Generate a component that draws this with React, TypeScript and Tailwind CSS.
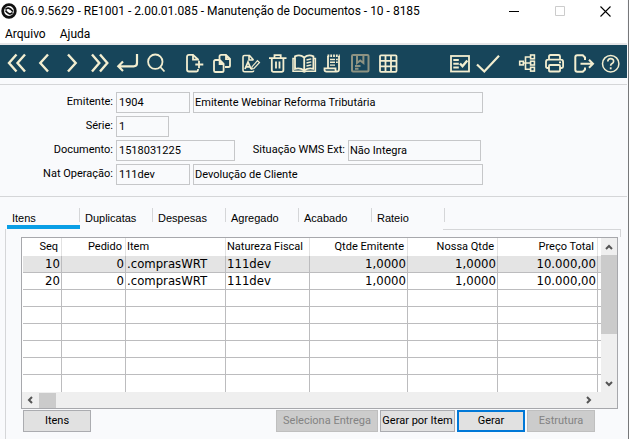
import type { ReactNode } from "react"

const Icon = ({ children }: { children: ReactNode }) => (
    <svg width="28" height="24" viewBox="0 0 28 24" fill="none" stroke="currentColor" strokeWidth="1.8" aria-hidden="true">
        {children}
    </svg>
)

type Tool = { label: string; icon: ReactNode; disabled?: boolean }

const navTools: Tool[] = [
    { label: "Primeiro", icon: <path strokeWidth="2.4" d="M14.500 2.500 7 11l7.500 8.500M23 2.500 15.500 11l7.500 8.500" /> },
    { label: "Anterior", icon: <path strokeWidth="2.4" d="M18 2.500 10.300 11l7.700 8.500" /> },
    { label: "Próximo", icon: <path strokeWidth="2.4" d="M10 2.500 17.700 11 10 19.500" /> },
    { label: "Último", icon: <path strokeWidth="2.4" d="M6 2.500 13.300 11 6 19.500M14 2.500 21.300 11l-7.300 8.500" /> },
    { label: "Vai para", icon: <path strokeWidth="2.2" d="M23 2v9q0 3.300-3.300 3.300H4.500M9 9.500l-4.700 4.800L9 19" /> },
    {
        label: "Pesquisa",
        icon: (
            <>
                <circle cx="13.3" cy="9.7" r="7.2" />
                <path d="m18.300 15 4.200 4.500" />
            </>
        ),
    },
]

const editTools: Tool[] = [
    { label: "Incluir", icon: <path d="M18 8.500V7.500L13 2.900H9q-2 0-2 2v12.600q0 2 2 2h7.500q1.500 0 1.500-1.500v-1M13 3v4.700h5M19 8.800v7.400M15.300 12.500h8" /> },
    {
        label: "Copiar",
        icon: (
            <path d="M11.500 8V4.500q0-1.600 1.600-1.600H18l4 4v6.500q0 1.600-1.600 1.600H17M18 3v4.200h4M11.800 8H7.500Q6 8 6 9.500v8.900Q6 20 7.500 20H14q1.600 0 1.600-1.600v-6.600zM11.600 8.200V12h4" />
        ),
    },
    {
        label: "Modificar",
        icon: (
            <>
                <path d="M17.500 8 13.500 3.500H8.500q-1.500 0-1.500 1.500v13.200q0 1.500 1.500 1.500h7.700q1.500 0 1.500-1.300M13 3.500V8h4.500" strokeWidth="1.600" />
                <path d="m9 17 3-7 3 7M10 14.800h4" />
                <path d="m21.500 8.700 2 1.800-5.600 6-2.400.7.600-2.500z" strokeWidth="1.200" />
            </>
        ),
    },
    { label: "Eliminar", icon: <path d="M5 6.200h17.500M10.500 6V3.200h6.200V6M7.800 6.500v11.500q0 1.800 1.800 1.800h8q1.800 0 1.800-1.800V6.500M12 9.500v7M15.500 9.500v7" /> },
    {
        label: "Consulta",
        icon: (
            <>
                <path d="M12.200 5.500Q8 2 3 4.400v12.400q5-1.500 9.200 1.700 4.200-3.200 9.200-1.700V4.400q-5-2.400-9.200 1.100v13" />
                <path d="M3 6.500H1v12.700h9.500l1.700.8 1.700-.8h9.500V6.500h-2" strokeWidth="1.500" />
                <path d="m14.500 8 4.800-1.200M14.500 11l4.800-1.200M14.500 14l4.800-1.200" strokeWidth="1.300" />
            </>
        ),
    },
    {
        label: "Relatório",
        icon: (
            <>
                <path d="M8 4v11.800M19 4v13.300q0 2.400-2.400 2.400H6.500q-2 0-2-2v-1.400h11v1.400q0 2 1.700 2" />
                <path d="M7.500 3.800h12.300" strokeWidth="2.600" strokeDasharray="1.800 1" />
                <path d="M10 7.500h5M16 7.500h1.800M10 10.300h5M16 10.300h1.800M10 13.100h5" strokeWidth="1.400" />
            </>
        ),
    },
    {
        label: "Salvar",
        disabled: true,
        icon: (
            <>
                <rect x="4" y="3" width="16.500" height="16.500" rx="1" strokeWidth="2" />
                <path d="M9 3.500V11l3.200-2.500 3.200 2.500V3.500M7 14h5.500M7 16.800h3.500" strokeWidth="2" />
            </>
        ),
    },
    {
        label: "Planilha",
        icon: (
            <>
                <rect x="4" y="3.300" width="16.500" height="16.500" rx="1" />
                <path d="M9.500 3.500v16M15 3.500v16M4 8.800h16.500M4 14.300h16.500" />
            </>
        ),
    },
]

const confirmTools: Tool[] = [
    {
        label: "Conferência",
        icon: (
            <>
                <rect x="5" y="4" width="18" height="15.500" />
                <path d="M7.300 8h5.500M7.300 11.700h5.500M7.300 15.400h5.500" strokeWidth="2" />
                <path d="m14 11.500 2.500 2.700L21.300 8.500" strokeWidth="2.400" />
            </>
        ),
    },
    { label: "Confirma", icon: <path strokeWidth="2.200" d="m3 12.500 7.300 7L25 3.700" /> },
]

const exitTools: Tool[] = [
    {
        label: "Consultas relacionadas",
        icon: (
            <g strokeWidth="1.600">
                <rect x="6.700" y="9.300" width="3.600" height="3.600" />
                <rect x="17.600" y="3" width="3.800" height="3.800" />
                <rect x="17.600" y="9.200" width="3.800" height="3.800" />
                <rect x="17.600" y="15.300" width="3.800" height="3.800" />
                <path d="M10.500 11h7M17.500 5h-5v12.300h5" />
            </g>
        ),
    },
    {
        label: "Imprimir",
        icon: (
            <>
                <path d="M8 7.500V4.500q0-1.500 1.500-1.500h8Q19 3 19 4.500v3M8 16H6.500Q5 16 5 14.500V10q0-2.300 2.300-2.300h12.500q2.300 0 2.300 2.300v4.500q0 1.500-1.500 1.500H19" />
                <rect x="8" y="13" width="11" height="6.500" rx="1" />
                <path d="M18 10.300h2" />
            </>
        ),
    },
    { label: "Sair", icon: <path strokeWidth="2" d="M16 8V5.500L13.800 3.300H8.300q-2 0-2 2v12.400q0 2 2 2h5.500l2.200-2.200V15.500M11.500 11.700H24M20 7.700l4 4-4 4" /> },
    {
        label: "Ajuda",
        icon: (
            <>
                <circle cx="13.700" cy="11.700" r="8.200" strokeWidth="1.500" />
                <path d="M10.800 9.500q0-2.800 2.900-2.800t2.900 2.600q0 1.500-1.500 2.300t-1.400 2.200" strokeWidth="1.700" />
                <path d="M13.700 15.300v2" />
            </>
        ),
    },
]

const ToolGroup = ({ tools, className = "" }: { tools: Tool[]; className?: string }) => (
    <div className={`flex ${className}`}>
        {tools.map((tool) => (
            <button key={tool.label} type="button" aria-label={tool.label} disabled={tool.disabled} className="w-7 text-[#f3eed0] disabled:text-[#8e9382]">
                <Icon>{tool.icon}</Icon>
            </button>
        ))}
    </div>
)

const TitleBar = () => (
    <header className="flex h-[22px] items-center pl-px">
        <svg width="16" height="16" viewBox="0 0 16 16" aria-hidden="true">
            <circle cx="8" cy="8" r="6.300" fill="#fff" stroke="#111" strokeWidth="2.800" />
            <path d="M4.500 6.500C6 4.200 9 4.600 12 8.500M11.500 9.500C10 11.800 7 11.400 4.500 7.500" fill="none" stroke="#111" strokeWidth="1.700" />
        </svg>
        <h1 className="ml-1 text-[12px]">06.9.5629 - RE1001 - 2.00.01.085 - Manutenção de Documentos - 10 - 8185</h1>
        <div className="ml-auto flex">
            <button type="button" aria-label="Minimizar" className="flex w-[46px] justify-center">
                <svg width="11" height="11" viewBox="0 0 11 11"><path d="M0 5.500h10" stroke="#000" /></svg>
            </button>
            <button type="button" aria-label="Maximizar" disabled className="flex w-[46px] justify-center">
                <svg width="11" height="11" viewBox="0 0 11 11"><path d="M.5.500h9v9h-9z" fill="none" stroke="#ccc" /></svg>
            </button>
            <button type="button" aria-label="Fechar" className="flex w-11 justify-center">
                <svg width="11" height="11" viewBox="0 0 11 11"><path d="m.5.500 10 10m0-10-10 10" stroke="#000" strokeWidth="1.100" /></svg>
            </button>
        </div>
    </header>
)

const field = "h-[21px] border border-[#c6c7c9] bg-[#f9fafc] outline-none"

const Label = ({ id, children }: { id: string; children: ReactNode }) => (
    <label htmlFor={id} className="w-28 pb-0.5 text-right">{children}</label>
)

const DocumentForm = () => (
    <form className="mt-[6px] flex flex-col gap-[3px] border-y border-[#d5d6d8] pt-[7px] pb-[11px] pl-px">
        <div className="flex items-center gap-[3px]">
            <Label id="emitente">Emitente:</Label>
            <input id="emitente" readOnly defaultValue="1904" className={`${field} w-[74px] px-0.5`} />
            <input aria-label="Nome do emitente" readOnly defaultValue="Emitente Webinar Reforma Tributária" className={`${field} w-[290px] px-px`} />
        </div>
        <div className="flex items-center gap-[3px]">
            <Label id="serie">Série:</Label>
            <input id="serie" readOnly defaultValue="1" className={`${field} w-[53px] px-0.5`} />
        </div>
        <div className="flex items-center gap-[3px]">
            <Label id="documento">Documento:</Label>
            <input id="documento" readOnly defaultValue="1518031225" className={`${field} w-[119px] px-0.5`} />
            <label htmlFor="situacao" className="w-[107px] pb-0.5 text-right whitespace-nowrap">Situação WMS Ext:</label>
            <input id="situacao" readOnly defaultValue="Não Integra" className={`${field} w-[133px] px-px`} />
        </div>
        <div className="flex items-center gap-[3px]">
            <Label id="natureza">Nat Operação:</Label>
            <input id="natureza" readOnly defaultValue="111dev" className={`${field} w-[74px] px-0.5`} />
            <input aria-label="Descrição da natureza" readOnly defaultValue="Devolução de Cliente" className={`${field} w-[290px] px-px`} />
        </div>
    </form>
)

const tabs = ["Itens", "Duplicatas", "Despesas", "Agregado", "Acabado", "Rateio"]

const Tabs = () => (
    <div role="tablist" className="flex h-[21px] pl-[6px] font-['Liberation_Sans',Arial,sans-serif]">
        {tabs.map((tab, i) => (
            <button
                key={tab}
                type="button"
                role="tab"
                aria-selected={i === 0}
                className="flex w-[73px] flex-col justify-between border-[#0a9fe6] text-left aria-selected:border-b-4"
            >
                <span className="flex h-[14px] w-full items-center border-r border-[#d5d6d8] pt-[6px] pl-[5px]">{tab}</span>
            </button>
        ))}
    </div>
)

const columns = [
    { name: "Seq", width: "w-[39px]", align: "text-right" },
    { name: "Pedido", width: "w-16", align: "text-right" },
    { name: "Item", width: "w-[100px]", align: "text-left" },
    { name: "Natureza Fiscal", width: "w-[84px]", align: "text-left" },
    { name: "Qtde Emitente", width: "w-[98px]", align: "text-right" },
    { name: "Nossa Qtde", width: "w-[90px]", align: "text-right" },
    { name: "Preço Total", width: "w-[100px]", align: "text-right" },
]

const rows = [
    ["10", "0", ".comprasWRT", "111dev", "1,0000", "1,0000", "10.000,00"],
    ["20", "0", ".comprasWRT", "111dev", "1,0000", "1,0000", "10.000,00"],
    ...Array.from({ length: 6 }, () => ["", "", "", "", "", "", ""]),
]

const Arrow = ({ d }: { d: string }) => (
    <svg width="8" height="8" viewBox="0 0 8 8" fill="none" stroke="#555" strokeWidth="2" aria-hidden="true"><path d={d} /></svg>
)

const ItemsGrid = () => (
    <div className="border border-[#a7a8ac] bg-white">
        <div className="flex">
            <div className="min-w-0 flex-1 pl-px">
                <table className="w-full table-fixed border-separate border-spacing-0">
                    <thead>
                        <tr className="h-[18px]">
                            {columns.map((col) => (
                                <th key={col.name} className={`${col.width} ${col.align} border-r border-[#e2e2e2] p-0 font-normal whitespace-nowrap`}>
                                    <span className={col.align === "text-right" ? "pr-[3px]" : "pl-px"}>{col.name}</span>
                                </th>
                            ))}
                            <th className="p-0"></th>
                        </tr>
                    </thead>
                    <tbody className="font-['DejaVu_Sans_Condensed','DejaVu_Sans',sans-serif] text-[13px] leading-4">
                        {rows.map((row, r) => (
                            <tr key={r} className="h-[17px] first:bg-[#e4e4e4] last:[&>td]:border-b-0">
                                {row.map((cell, c) => (
                                    <td key={c} className={`${columns[c].align} border-r border-b border-[#bcbcbe] px-px py-0`}>{cell}</td>
                                ))}
                                <td className="border-b border-[#bcbcbe] p-0"></td>
                            </tr>
                        ))}
                    </tbody>
                </table>
            </div>
            <div className="flex w-4 flex-col items-center bg-[#efefef]">
                <span className="flex h-[17px] items-center"><Arrow d="M1 6l3-3 3 3" /></span>
                <span className="h-[79px] w-full bg-[#cbcbcb]"></span>
                <span className="mt-auto pb-1"><Arrow d="M1 2l3 3 3-3" /></span>
            </div>
        </div>
        <div className="flex h-4 items-center justify-between bg-[#efefef] pr-6 pl-1">
            <div className="flex items-center gap-[5px]">
                <Arrow d="M6 1L3 4l3 3" />
                <span className="h-[15px] w-[17px] bg-[#cbcbcb]"></span>
            </div>
            <Arrow d="M2 1l3 3-3 3" />
        </div>
    </div>
)

const button = "h-[22px] border border-[#abacb0] bg-[#e1e1e1] pb-px whitespace-nowrap disabled:border-[#bfbfbf] disabled:bg-[#cccccc] disabled:text-[#838383]"

const App = () => {
    return (
        <div className="min-h-screen border-r border-[#77787a] bg-[#f9fafc] pr-px font-['Roboto','Noto_Sans',sans-serif] text-[11px] leading-4 text-black">
            <div className="bg-white">
                <TitleBar />
                <nav className="flex h-[23px] gap-[14px] border-b-2 border-[#e6e6e8] pl-[5px] text-[12px] leading-6">
                    <button type="button">Arquivo</button>
                    <button type="button">Ajuda</button>
                </nav>
            </div>
            <div className="flex h-[33px] bg-[#17455a] px-0.5 pt-1">
                <ToolGroup tools={navTools} />
                <ToolGroup tools={editTools} className="ml-[10px]" />
                <ToolGroup tools={confirmTools} className="ml-auto" />
                <ToolGroup tools={exitTools} className="ml-[11px]" />
            </div>
            <DocumentForm />
            <main className="mt-[11px] pr-[6px] pl-px">
                <Tabs />
                <div className="ml-1 border-l border-[#d5d6d8]">
                    <div className="ml-[437px] h-2 border-t border-r border-[#d5d6d8]"></div>
                    <div className="pr-[3px] pb-2 pl-[15px]">
                        <ItemsGrid />
                        <div className="mt-px flex gap-0.5 pr-[23px] pl-0.5">
                            <button type="button" className={`${button} mr-auto w-[68px]`}>Itens</button>
                            <button type="button" disabled className={`${button} w-[102px]`}>Seleciona Entrega</button>
                            <button type="button" className={`${button} w-[75px]`}>Gerar por Item</button>
                            <button type="button" className="h-[22px] w-[68px] border-2 border-[#0078d7] bg-[#e1e1e1] pb-px">Gerar</button>
                            <button type="button" disabled className={`${button} w-[68px]`}>Estrutura</button>
                        </div>
                    </div>
                </div>
            </main>
        </div>
    )
}

export default App
